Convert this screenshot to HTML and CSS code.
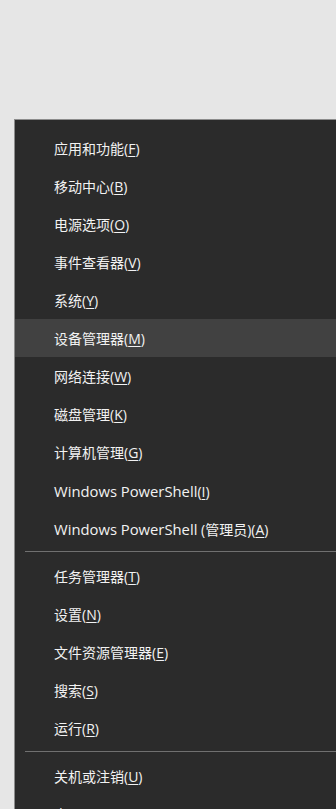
FILE: index.html
```html
<!DOCTYPE html>
<html lang="zh-CN">
<head>
<meta charset="utf-8">
<link rel="stylesheet" href="styles.css">
</head>
<body>
<div class="screen">
  <div class="menu">
    <div class="item">应用和功能(<u>F</u>)</div>
    <div class="item">移动中心(<u>B</u>)</div>
    <div class="item">电源选项(<u>O</u>)</div>
    <div class="item">事件查看器(<u>V</u>)</div>
    <div class="item">系统(<u>Y</u>)</div>
    <div class="item active">设备管理器(<u>M</u>)</div>
    <div class="item">网络连接(<u>W</u>)</div>
    <div class="item">磁盘管理(<u>K</u>)</div>
    <div class="item">计算机管理(<u>G</u>)</div>
    <div class="item"><span class="latin">Windows PowerShell</span>(<u>I</u>)</div>
    <div class="item"><span class="latin">Windows PowerShell</span> (管理员)(<u>A</u>)</div>
    <div class="sep"></div>
    <div class="item">任务管理器(<u>T</u>)</div>
    <div class="item">设置(<u>N</u>)</div>
    <div class="item">文件资源管理器(<u>E</u>)</div>
    <div class="item">搜索(<u>S</u>)</div>
    <div class="item">运行(<u>R</u>)</div>
    <div class="sep"></div>
    <div class="item">关机或注销(<u>U</u>)</div>
    <div class="item">桌面(<u>D</u>)</div>
  </div>
</div>
</body>
</html>
```
FILE: styles.css
```css
html, body {
  margin: 0;
  padding: 0;
  width: 336px;
  height: 809px;
  overflow: hidden;
  background: #e6e6e6;
}
.screen {
  height: 809px;
  padding-top: 119px;
  padding-left: 14px;
  box-sizing: border-box;
}
.menu {
  background: #2b2b2b;
  border-top: 1px solid #8c8c8c;
  border-left: 1px solid #8c8c8c;
  padding-top: 9px;
  height: 900px;
  box-sizing: border-box;
  font-family: "Open Sans", "Noto Sans CJK SC", sans-serif;
  font-size: 14px;
  color: #f2f2f2;
}
.item {
  height: 38px;
  box-sizing: border-box;
  padding-top: 2px;
  line-height: 36px;
  padding-left: 39px;
  white-space: nowrap;
}
.latin {
  font-size: 14.8px;
}
.item u {
  text-decoration: underline;
  text-underline-offset: 2px;
}
.item.active {
  background: #414141;
}
.sep {
  height: 10px;
  position: relative;
}
.sep::after {
  content: "";
  position: absolute;
  left: 10px;
  right: 0;
  top: 4px;
  height: 1px;
  background: #707070;
}
```
